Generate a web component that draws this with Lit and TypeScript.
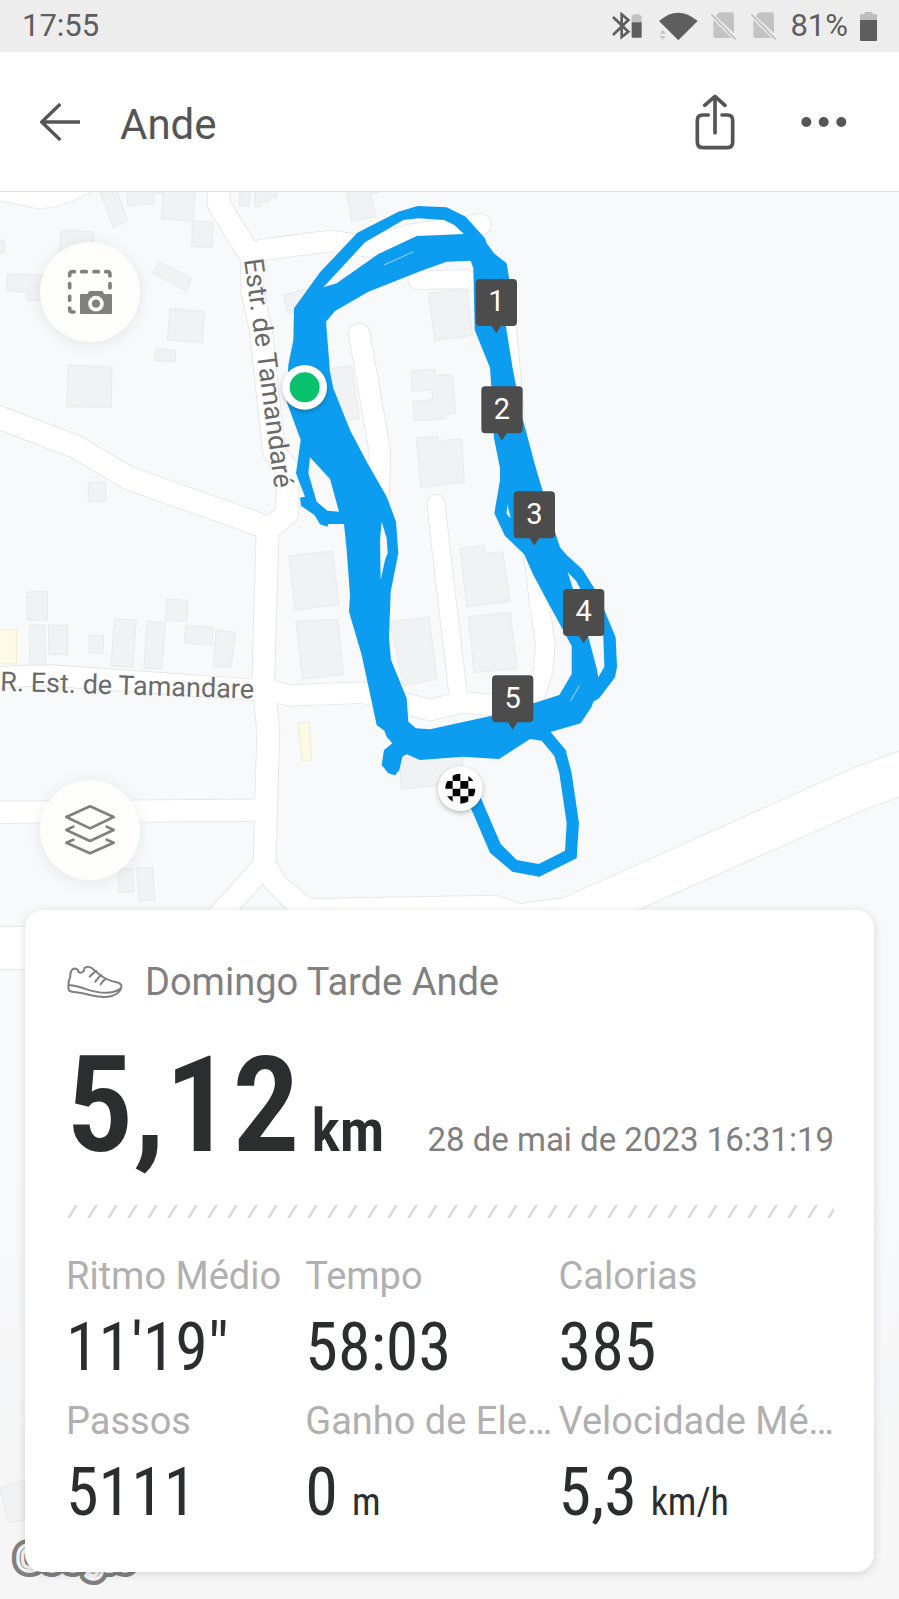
import { LitElement, html, css, svg } from "lit";
import { customElement } from "lit/decorators.js";

interface Stat {
  label: string;
  value: string;
  unit?: string;
}

interface Pin {
  n: number;
  x: number;
  y: number;
}

interface Road {
  d: string;
  w: number;
}

// Map geometry uses a grid of three units per CSS pixel.
const ROADS: Road[] = [
  { d: "M653,-40 657,39 757,200 757,299 782,409 822,779 862,830 862,964 803,1015 802,1044 790,1464 805,1619 798,1844 794,2019 630,2200", w: 66 },
  { d: "M-40,664 0,678 225,763 385,858 715,975 803,1008", w: 68 },
  { d: "M760,180 810,170 990,147 1110,164 1230,129 1442,97", w: 62 },
  { d: "M1252,264 1390,262 1460,280", w: 54 },
  { d: "M1078,426 1140,779 1135,939", w: 62 },
  { d: "M1308,934 1325,1089 1377,1531", w: 52 },
  { d: "M1520,409 1545,679 1570,879 1590,1044 1605,1124 1618,1234 1636,1354 1630,1434 1600,1524", w: 56 },
  { d: "M-40,1456 0,1456 130,1449 800,1496 870,1510 1090,1502 1290,1554 1385,1531 1610,1550", w: 62 },
  { d: "M-40,1861 795,1854", w: 64 },
  { d: "M-70,2268 400,2268", w: 126 },
];

const AVENUE =
  "M830,2014 855,2059 935,2122 1490,2111 1560,2136 1690,2119 2560,1729 2740,1664 2740,1799 2610,1844 1910,2154 1800,2210 940,2210 865,2154 805,2095 785,2070Z";
const CORNER = "M-10,-10 290,-10 210,29 160,44 115,49 -10,23Z";

const BUILDINGS = [
  "300,-1 340,107 382,86 352,-1",
  "383,-1 383,41 410,41 410,36 462,36 462,5 490,5 490,-1",
  "490,-1 485,81 580,88 585,-1",
  "577,86 640,91 636,167 575,163",
  "182,114 280,119 280,180 180,180",
  "-4,145 12,145 14,182 -4,182",
  "22,246 130,250 130,325 80,325 82,300 20,297",
  "478,209 575,258 560,298 458,243",
  "510,349 613,359 607,451 502,445",
  "467,470 527,474 526,509 463,506",
  "205,520 336,524 334,646 200,644",
  "265,872 317,870 318,927 265,929",
  "720,-1 718,42 748,42 750,-1",
  "765,-1 762,44 783,44 785,30 810,28 812,15 830,15 830,-1",
  "1040,-1 1055,88 1127,74 1112,5 1140,-1",
  "850,309 920,290 920,350 865,366",
  "1285,305 1400,290 1418,430 1305,446",
  "995,529 1055,522 1078,679 1000,690",
  "1233,538 1305,531 1307,548 1358,550 1367,663 1337,667 1337,680 1243,687 1240,630 1298,622 1296,594 1236,598",
  "1250,738 1313,732 1315,746 1385,741 1393,870 1262,887",
  "867,1092 997,1077 1017,1237 886,1254",
  "888,1287 1013,1282 1030,1447 907,1461",
  "1380,1069 1453,1061 1455,1084 1508,1079 1530,1229 1400,1244",
  "1405,1274 1530,1261 1552,1429 1422,1442",
  "1170,1289 1288,1276 1310,1462 1210,1481",
  "1200,1699 1387,1694 1387,1774 1203,1791",
  "80,1200 142,1197 142,1284 81,1285",
  "88,1300 133,1298 138,1420 90,1420",
  "145,1300 203,1299 203,1387 147,1387",
  "268,1330 311,1331 309,1384 267,1381",
  "343,1280 409,1284 398,1427 333,1421",
  "440,1287 497,1293 485,1431 432,1428",
  "500,1221 564,1225 560,1288 497,1285",
  "557,1299 641,1308 635,1360 553,1353",
  "648,1315 707,1321 693,1427 640,1423",
  "355,2029 400,2031 401,2099 356,2101",
  "410,2029 458,2025 464,2125 417,2126",
  "0,3889 73,3864 73,3984 25,3992",
];

const SHOPS = ["895,1594 927,1591 935,1704 907,1706", "-4,1313 49,1313 49,1415 -4,1415"];

const TRACK = [
  "M72,370 150,262 262,143 385,80 443,63 530,67 587,95 645,160 650,175 672,205 710,235 718,285 708,425 728,550 755,690 795,840 820,925 858,1050 870,1087 890,1110 937,1153 970,1205 1003,1275 1037,1357 1041,1445 1035,1477 988,1539 970,1550 965,1565 932,1615 842,1641 887,1695 905,1765 927,1915 920,2020 808,2075 727,2060 660,2003 590,1840 620,1810 692,1977 740,2025 806,2037 885,1997 890,1915 868,1765 853,1713 815,1667 780,1662 687,1722 578,1715 450,1725 410,1708 397,1715 388,1755 375,1771 355,1765 335,1740 342,1695 367,1675 350,1655 343,1637 320,1620 275,1410 237,1280 240,1230 230,1095 222,1017 175,1017 172,1025 150,1018 133,990 93,962 90,938 105,935 78,865 92,765 50,650 55,540 70,465Z",
  "M160,307 285,172 400,105 445,100 522,105 553,120 582,147 440,153 325,207 200,295Z",
  "M168,410 195,378 295,320 460,255 530,230 602,227 610,250 614,435 660,548 665,620 672,760 690,850 690,885 673,985 705,1053 762,1107 790,1170 830,1245 905,1383 905,1467 868,1530 790,1555 665,1592 480,1633 438,1630 415,1610 410,1540 363,1425 357,1360 362,1220 385,1105 378,1010 350,935 290,830 240,735 190,610 180,560Z",
  "M120,817 180,882 207,980 172,977 140,950 115,865Z",
  "M335,1010 350,1060 353,1105 345,1125 332,1185 330,1065Z",
  "M712,958 722,1000 710,987Z",
  "M893,1162 918,1187 960,1265 1000,1355 1003,1445 985,1477 980,1450 955,1355 910,1215Z",
].join(" ");

const PINS: Pin[] = [
  { n: 1, x: 679, y: 282 },
  { n: 2, x: 696, y: 604 },
  { n: 3, x: 793, y: 919 },
  { n: 4, x: 941, y: 1212 },
  { n: 5, x: 728, y: 1471 },
];

const STATS: Stat[] = [
  { label: "Ritmo Médio", value: "11'19\"" },
  { label: "Tempo", value: "58:03" },
  { label: "Calorias", value: "385" },
  { label: "Passos", value: "5111" },
  { label: "Ganho de Ele…", value: "0", unit: "m" },
  { label: "Velocidade Mé…", value: "5,3", unit: "km/h" },
];

@customElement("status-bar")
export class StatusBar extends LitElement {
  static styles = css`
    :host {
      display: flex;
      align-items: center;
      gap: 12px;
      height: 52px;
      padding: 0 22px;
      background: #ededed;
      color: #5e5e5e;
      font: 31px/52px Roboto, sans-serif;
    }
    .clock {
      margin-right: auto;
    }
    svg {
      flex: none;
      display: block;
    }
  `;

  private sim() {
    return html`<svg width="28" height="28" viewBox="780 36 84 84" aria-hidden="true">
      <path d="M808,37H846Q852,37 852,43V100L797,48ZM790,60 845,114H796Q790,114 790,108Z" fill="#c3c3c3" />
      <path d="M784,43 857,118" stroke="#c3c3c3" stroke-width="6" />
    </svg>`;
  }

  render() {
    return html`
      <span class="clock">17:55</span>
      <svg width="34" height="28" viewBox="490 37 102 84" aria-hidden="true">
        <path d="M493,52 539,96 519,112V44L539,61 493,106" fill="none" stroke="#5e5e5e" stroke-width="8" />
        <path d="M549,68V50Q549,47 553,47V44H573V47Q579,47 579,50V68Z" fill="#c3c3c3" />
        <path d="M549,68H579V111Q579,114 576,114H552Q549,114 549,111Z" fill="#5e5e5e" />
      </svg>
      <svg width="40" height="29" viewBox="628 35 120 87" aria-hidden="true">
        <path d="M631,62Q688,12 747,62L689,120Z" fill="#5e5e5e" />
        <path d="M633,100 642,89 651,100ZM633,107 642,118 651,107Z" fill="#c3c3c3" />
      </svg>
      ${this.sim()} ${this.sim()}
      <span>81%</span>
      <svg width="17" height="29" viewBox="1227 35 51 87" aria-hidden="true">
        <path d="M1227,62V44Q1227,41 1230,41H1241V35H1264V41H1275Q1278,41 1278,44V62Z" fill="#bdbdbd" />
        <path d="M1227,59H1278V119Q1278,122 1275,122H1230Q1227,122 1227,119Z" fill="#5e5e5e" />
      </svg>
    `;
  }
}

@customElement("activity-header")
export class ActivityHeader extends LitElement {
  static styles = css`
    :host {
      display: flex;
      align-items: center;
      box-sizing: border-box;
      height: 140px;
      padding: 0 52px 0 40px;
      background: #fff;
      border-bottom: 1px solid #dcdddf;
      color: #555;
    }
    h1 {
      flex: 1;
      margin: 0 0 0 40px;
      padding-top: 6px;
      font: 400 42px/48px Roboto, sans-serif;
    }
    button {
      display: flex;
      padding: 0;
      border: 0;
      background: none;
      color: inherit;
      cursor: pointer;
    }
    .more {
      margin-left: 66px;
    }
  `;

  render() {
    return html`
      <button type="button" aria-label="Voltar">
        <svg width="40" height="38" viewBox="120 311 120 114">
          <path d="M240,368H125M181,314 125,368 181,422" fill="none" stroke="currentColor" stroke-width="10" />
        </svg>
      </button>
      <h1>Ande</h1>
      <button type="button" aria-label="Compartilhar">
        <svg width="40" height="56" viewBox="733 282 120 168">
          <path
            d="M793,399V290M762,316 793,289 823,316M773,345H756Q740,345 740,361V426Q740,443 756,443H830Q846,443 846,426V361Q846,345 830,345H814"
            fill="none"
            stroke="currentColor"
            stroke-width="11"
            stroke-linecap="round"
            stroke-linejoin="round"
          />
        </svg>
      </button>
      <button class="more" type="button" aria-label="Mais">
        <svg width="46" height="12" viewBox="1054 350 138 36">
          <g fill="currentColor">
            <circle cx="1070" cy="368" r="15" />
            <circle cx="1122" cy="368" r="15" />
            <circle cx="1175" cy="368" r="15" />
          </g>
        </svg>
      </button>
    `;
  }
}

@customElement("route-map")
export class RouteMap extends LitElement {
  static styles = css`
    :host {
      display: block;
    }
    svg {
      display: block;
      width: 100%;
      height: 100%;
    }
    .edge {
      stroke: #e2e4e8;
    }
    .surface {
      stroke: #fff;
    }
    .street {
      fill: none;
      stroke-linecap: round;
      stroke-linejoin: round;
    }
    .building {
      fill: #f1f2f4;
      stroke: #e2e3e6;
      stroke-width: 2;
    }
    .shop {
      fill: #fdfbe8;
      stroke: #f4ecc8;
      stroke-width: 3;
    }
    .street-name {
      font: 81px Roboto, sans-serif;
      fill: #6a6a6a;
    }
    .pin-number {
      font: 87px Roboto, sans-serif;
      fill: #fff;
      text-anchor: middle;
    }
    .brand {
      font: 500 111px Roboto, sans-serif;
    }
    .marker {
      filter: drop-shadow(0 6px 8px rgb(0 0 0 / 0.25));
    }
  `;

  private streets(kind: string, extra: number) {
    return svg`<g class="street ${kind}">
      ${ROADS.map((r) => svg`<path d=${r.d} stroke-width=${r.w + extra} />`)}
    </g>
    <path class=${kind} d=${AVENUE} fill="#fff" stroke-width=${extra ? 6 : 1} />
    <path class=${kind} d=${CORNER} fill="#fff" stroke-width=${extra ? 5 : 1} />`;
  }

  private pin(p: Pin) {
    return svg`<g transform="translate(${p.x} ${p.y})">
      <path d="M-50,0H50Q62,0 62,12V129Q62,141 50,141H14L0,163L-14,141H-50Q-62,141 -62,129V12Q-62,0 -50,0Z" fill="#4c4c4c" />
      <text class="pin-number" x="0" y="97">${p.n}</text>
    </g>`;
  }

  render() {
    return html`<svg viewBox="0 0 2697 4221" preserveAspectRatio="xMidYMin slice" role="img" aria-label="Mapa do percurso">
      <defs>
        <linearGradient id="ground" x1="0" y1="0" x2="0" y2="1">
          <stop offset="0.7" stop-color="#f8f9fb" />
          <stop offset="0.95" stop-color="#f6f6f6" />
        </linearGradient>
        <path id="north" d="M732,203 766,450 838,1000" />
        <path id="west" d="M0,1496 380,1508 820,1521" />
        <clipPath id="flag"><circle cx="571" cy="1811" r="45" /></clipPath>
        <text id="brand" class="brand" x="48" y="4138">Google</text>
      </defs>
      <rect width="2697" height="4221" fill="url(#ground)" />
      ${this.streets("edge", 5)} ${this.streets("surface", 0)}
      ${BUILDINGS.map((b) => svg`<polygon class="building" points=${b} />`)}
      ${SHOPS.map((b) => svg`<polygon class="shop" points=${b} />`)}
      <text class="street-name"><textPath href="#north">Estr. de Tamandaré</textPath></text>
      <text class="street-name"><textPath href="#west">R. Est. de Tamandare</textPath></text>
      <use href="#brand" fill="#808080" stroke="#808080" stroke-width="36" stroke-linejoin="round" />
      <use href="#brand" fill="#808080" stroke="#f6f6f6" stroke-width="10" />
      <g transform="translate(810 -21)">
        <path d=${TRACK} fill="#0d9df0" fill-rule="evenodd" />
        <path d="M342,240 430,200M902,1548 928,1502" stroke="#9fd6f9" stroke-width="3" />
        ${PINS.map((p) => this.pin(p))}
        <g class="marker">
          <circle cx="104" cy="607" r="67" fill="#fff" />
          <circle cx="104" cy="607" r="45" fill="#08c16c" />
        </g>
        <g class="marker">
          <circle cx="571" cy="1811" r="67" fill="#fff" />
          <path
            clip-path="url(#flag)"
            d="M548,1765h23v23h-23zM595,1765h23v23h-23zM525,1788h23v23h-23zM571,1788h24v23h-24zM548,1811h23v23h-23zM595,1811h23v23h-23zM525,1834h23v24h-23zM571,1834h24v24h-24z"
          />
        </g>
      </g>
    </svg>`;
  }
}

@customElement("summary-card")
export class SummaryCard extends LitElement {
  static styles = css`
    :host {
      display: block;
      padding: 50px 40px 43px 41px;
      background: #fff;
      border-radius: 18px;
      box-shadow: 0 2px 10px rgb(0 0 0 / 0.14);
      font-family: Roboto, sans-serif;
      color: #2c2d2e;
    }
    .name {
      display: flex;
      align-items: center;
      gap: 22px;
      padding-left: 1px;
      color: #808080;
    }
    h2 {
      margin: 0;
      font: 400 38px/44px Roboto, sans-serif;
    }
    .total {
      display: flex;
      align-items: baseline;
      justify-content: space-between;
      margin-top: 32px;
    }
    .distance {
      display: flex;
      align-items: baseline;
      gap: 12px;
      font: 600 134px/140px "Roboto Condensed", "Liberation Sans Narrow", Roboto, sans-serif;
    }
    .distance-unit {
      font-size: 60px;
      line-height: 72px;
    }
    time {
      font-size: 33px;
      line-height: 40px;
      color: #808080;
    }
    .divider {
      display: block;
      width: 100%;
      height: 13px;
      margin: 29px 0 36px;
    }
    dl {
      display: grid;
      grid-template-columns: 240fr 254fr 272fr;
      row-gap: 15px;
      margin: 0;
    }
    dt {
      font-size: 38px;
      line-height: 44px;
      white-space: nowrap;
      color: #b0b0b0;
    }
    dd {
      margin: 14px 0 0;
      font: 400 66px/72px "Roboto Condensed", "Liberation Sans Narrow", Roboto, sans-serif;
      white-space: nowrap;
    }
    .unit {
      margin-left: 14px;
      font-size: 38px;
      line-height: 40px;
    }
  `;

  render() {
    return html`
      <div class="name">
        <svg width="56" height="34" viewBox="203 188 168 102" aria-hidden="true">
          <path
            d="M219,201Q212,208 213,222Q205,240 208,262Q210,268 225,269Q250,272 275,279Q330,292 355,272Q366,262 366,254Q367,243 352,240Q322,234 303,219L277,197Q264,189 256,197Q253,211 244,211Q236,211 236,203Q229,196 219,201ZM209,248Q240,252 262,261Q330,283 365,258M291,206Q285,209 271,223M305,218Q298,224 288,238M319,230Q312,233 304,246"
            fill="none"
            stroke="currentColor"
            stroke-width="6"
            stroke-linecap="round"
            stroke-linejoin="round"
          />
        </svg>
        <h2>Domingo Tarde Ande</h2>
      </div>
      <div class="total">
        <div class="distance">5,12<span class="distance-unit">km</span></div>
        <time datetime="2023-05-28T16:31:19">28 de mai de 2023 16:31:19</time>
      </div>
      <svg class="divider" aria-hidden="true">
        <pattern id="slashes" width="20" height="13" patternUnits="userSpaceOnUse">
          <path d="M1,13H4L12,0H9Z" fill="#dadada" />
        </pattern>
        <rect width="100%" height="13" fill="url(#slashes)" />
      </svg>
      <dl>
        ${STATS.map(
          (s) => html`<div>
            <dt>${s.label}</dt>
            <dd>${s.value}${s.unit ? html`<span class="unit">${s.unit}</span>` : ""}</dd>
          </div>`
        )}
      </dl>
    `;
  }
}

@customElement("app-root")
export class AppRoot extends LitElement {
  static styles = css`
    :host {
      display: flex;
      flex-direction: column;
      min-height: 100vh;
      background: #fff;
    }
    main {
      position: relative;
      flex: 1;
      box-sizing: border-box;
      padding: 50px 25px 27px;
      overflow: hidden;
    }
    route-map {
      position: absolute;
      inset: 0;
    }
    .tools {
      position: relative;
      display: flex;
      flex-direction: column;
      gap: 438px;
      width: 100px;
      margin: 0 0 30px 15px;
    }
    .tool {
      display: flex;
      align-items: center;
      justify-content: center;
      width: 100px;
      height: 100px;
      padding: 0;
      border: 0;
      border-radius: 50%;
      background: #fdfdfb;
      box-shadow: 0 2px 16px rgb(0 0 0 / 0.08);
      color: #808080;
      cursor: pointer;
    }
    summary-card {
      position: relative;
    }
  `;

  render() {
    return html`
      <status-bar></status-bar>
      <activity-header></activity-header>
      <main>
        <route-map></route-map>
        <div class="tools">
          <button class="tool" type="button" aria-label="Capturar mapa">
            <svg width="46" height="46" viewBox="201 253 138 138">
              <g fill="none" stroke="currentColor" stroke-width="11" stroke-linecap="round">
                <path d="M209,273V270Q209,261 218,261H223M245,261H259M282,261H295M317,261H322Q330,261 330,270V274M330,297V310M209,297V309M209,335V347M209,370V374Q209,382 218,382H222" />
              </g>
              <path
                d="M243,328H262L268,319H307L313,328H333Q336,328 336,331V385Q336,388 333,388H243Q240,388 240,385V331Q240,328 243,328Z"
                fill="currentColor"
              />
              <circle cx="288" cy="357" r="18" fill="currentColor" stroke="#fdfdfb" stroke-width="11" />
            </svg>
          </button>
          <button class="tool" type="button" aria-label="Camadas">
            <svg width="52" height="52" viewBox="194 795 156 156">
              <path
                d="M272,802 343,834 272,868 201,834ZM222,863 201,873 272,906 343,873 322,863M222,902 201,911 272,943 343,911 322,902"
                fill="none"
                stroke="currentColor"
                stroke-width="8"
                stroke-linejoin="round"
                stroke-linecap="round"
              />
            </svg>
          </button>
        </div>
        <summary-card></summary-card>
      </main>
    `;
  }
}
